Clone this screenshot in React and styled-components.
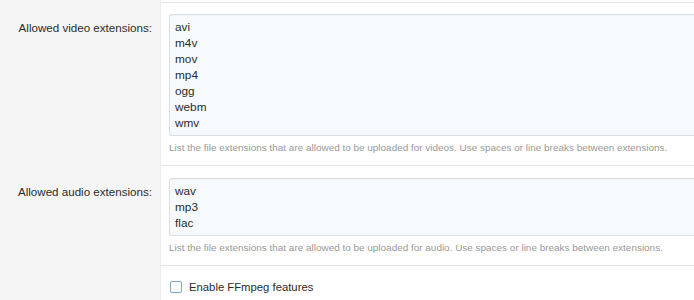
import React from "react";
import styled, { createGlobalStyle } from "styled-components";

const GlobalStyle = createGlobalStyle`
  html, body {
    margin: 0;
    padding: 0;
    background: #f5f5f5;
    font-family: "Liberation Sans", Arial, Helvetica, sans-serif;
    color: #333;
  }
`;

const Page = styled.div`
  width: 694px;
  height: 300px;
  overflow: hidden;
  background: #f5f5f5;
`;

const Row = styled.div`
  display: flex;
`;

const LabelCell = styled.div`
  width: 161px;
  flex: none;
  box-sizing: border-box;
  padding: ${(p) => p.top ?? 17}px 8px 0 0;
  text-align: right;
  font-size: 11.6px;
  line-height: 16px;
  color: #2b2b2b;
  background: #f5f5f5;
  border-right: 1px solid #ececec;
`;

const FieldCell = styled.div`
  flex: 1;
  min-width: 0;
  overflow: hidden;
  background: #fff;
  box-sizing: border-box;
  padding: ${(p) => (p.stub ? "0" : `${p.top ?? 11}px 0 ${p.bottom ?? 11}px 8px`)};
  height: ${(p) => (p.stub ? "3px" : "auto")};
  border-bottom: ${(p) => (p.last ? "none" : "1px solid #e4e4e4")};
`;

const ExtList = styled.textarea`
  display: block;
  width: 560px;
  height: ${(p) => p.lines * 16 + 10}px;
  box-sizing: border-box;
  margin: 0;
  padding: 4px 5px;
  border: 1px solid #dcdfe2;
  border-right: none;
  border-radius: 3px 0 0 3px;
  background: #f7fafd;
  box-shadow: inset 0 1px 1px rgba(0, 0, 0, 0.03);
  font-family: "Liberation Sans", Arial, Helvetica, sans-serif;
  font-size: 11.8px;
  line-height: 16px;
  color: #2b2b2b;
  resize: none;
  overflow: hidden;
  outline: none;
`;

const Help = styled.div`
  margin-top: 5px;
  font-size: 9.95px;
  line-height: 13px;
  color: #999;
  white-space: nowrap;
`;

const CheckRow = styled.label`
  display: flex;
  align-items: center;
  gap: 7px;
  padding-left: 1px;
  font-size: 11.3px;
  line-height: 16px;
  color: #2b2b2b;
`;

const Box = styled.span`
  width: 10px;
  height: 10px;
  flex: none;
  border: 1px solid #7fa9c9;
  border-radius: 2px;
  background: #fff;
`;

const video = ["avi", "m4v", "mov", "mp4", "ogg", "webm", "wmv"];
const audio = ["wav", "mp3", "flac"];

export default function App() {
  return (
    <Page>
      <GlobalStyle />
      <Row>
        <LabelCell top={0} />
        <FieldCell stub />
      </Row>
      <Row>
        <LabelCell>Allowed video extensions:</LabelCell>
        <FieldCell top={11} bottom={11}>
          <ExtList lines={video.length} defaultValue={video.join("\n")} readOnly />
          <Help>
            List the file extensions that are allowed to be uploaded for videos. Use spaces or line
            breaks between extensions.
          </Help>
        </FieldCell>
      </Row>
      <Row>
        <LabelCell top={18}>Allowed audio extensions:</LabelCell>
        <FieldCell top={12} bottom={11}>
          <ExtList lines={audio.length} defaultValue={audio.join("\n")} readOnly />
          <Help>
            List the file extensions that are allowed to be uploaded for audio. Use spaces or line
            breaks between extensions.
          </Help>
        </FieldCell>
      </Row>
      <Row>
        <LabelCell />
        <FieldCell top={13} bottom={20} last>
          <CheckRow>
            <Box />
            Enable FFmpeg features
          </CheckRow>
        </FieldCell>
      </Row>
    </Page>
  );
}
